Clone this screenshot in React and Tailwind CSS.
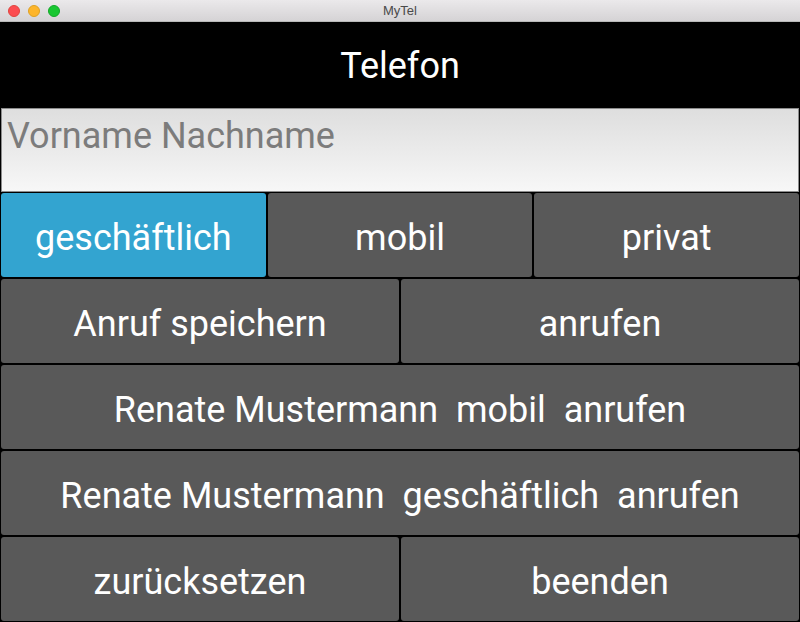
import React from "react";

function Btn({ children, active }) {
  return (
    <div
      className={`flex items-center justify-center rounded-[3px] text-white text-[36px] whitespace-pre pt-[5px] ${
        active ? "bg-[#33a4d0]" : "bg-[#595959]"
      }`}
    >
      {children}
    </div>
  );
}

export default function App() {
  return (
    <div
      className="w-[800px] h-[622px] flex flex-col bg-black overflow-hidden"
      style={{ fontFamily: "Roboto, 'Noto Sans', sans-serif" }}
    >
      <div className="h-[22px] flex items-center relative bg-gradient-to-b from-[#ebe9eb] to-[#d5d3d5] border-b border-[#b9b9b9]">
        <div className="flex gap-[8px] pl-[8px]">
          <div className="w-[12px] h-[12px] rounded-full bg-[#fc4c50] border border-[#e0443e]" />
          <div className="w-[12px] h-[12px] rounded-full bg-[#fdb52b] border border-[#dea123]" />
          <div className="w-[12px] h-[12px] rounded-full bg-[#19c732] border border-[#13a829]" />
        </div>
        <div className="absolute inset-0 flex items-center justify-center text-[13px] text-[#4a4a4a]" style={{ fontFamily: "'Liberation Sans', sans-serif" }}>
          MyTel
        </div>
      </div>
      <div className="h-[86px] flex items-center justify-center text-white text-[36px] pt-[2px]">
        Telefon
      </div>
      <div className="h-[84px] mx-[1px] border border-[#8c8c8c] bg-gradient-to-b from-[#dedede] to-[#f7f7f7] px-[5px] pt-[5px] text-[36px] text-[#7c7c7c] leading-[44px]">
        Vorname Nachname
      </div>
      <div className="flex-1 grid grid-rows-5 gap-[2px] p-[1px] pb-[1px]">
        <div className="grid grid-cols-3 gap-[2px]">
          <Btn active>geschäftlich</Btn>
          <Btn>mobil</Btn>
          <Btn>privat</Btn>
        </div>
        <div className="grid grid-cols-2 gap-[2px]">
          <Btn>Anruf speichern</Btn>
          <Btn>anrufen</Btn>
        </div>
        <div className="grid grid-cols-1">
          <Btn>Renate Mustermann  mobil  anrufen</Btn>
        </div>
        <div className="grid grid-cols-1">
          <Btn>Renate Mustermann  geschäftlich  anrufen</Btn>
        </div>
        <div className="grid grid-cols-2 gap-[2px]">
          <Btn>zurücksetzen</Btn>
          <Btn>beenden</Btn>
        </div>
      </div>
    </div>
  );
}
